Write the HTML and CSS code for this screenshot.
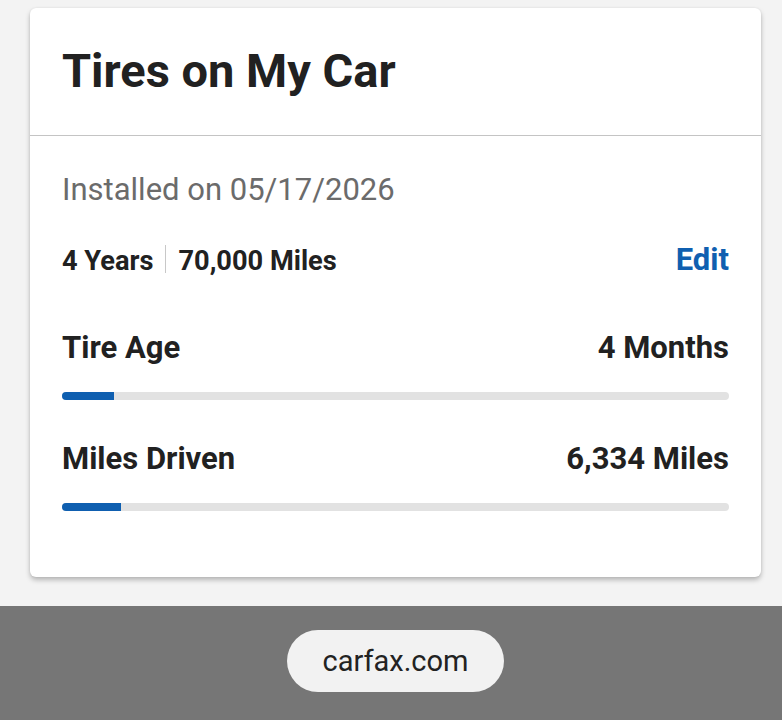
FILE: index.html
```html
<!DOCTYPE html>
<html>
<head>
  <meta charset="utf-8" />
  <title>Tires on My Car</title>
  <link rel="stylesheet" href="styles.css">
</head>
<body>
  <div class="page">
    <div class="card">
      <h1 class="card-title">Tires on My Car</h1>
      <div class="card-body">
        <div class="installed">Installed on 05/17/2026</div>
        <div class="warranty">
          <span class="warranty-info">4 Years<span class="sep"></span>70,000 Miles</span>
          <a class="edit" href="#">Edit</a>
        </div>
        <div class="stat">
          <div class="stat-row">
            <span>Tire Age</span>
            <span>4 Months</span>
          </div>
          <div class="bar"><div class="bar-fill" style="width: 7.8%"></div></div>
        </div>
        <div class="stat">
          <div class="stat-row">
            <span>Miles Driven</span>
            <span>6,334 Miles</span>
          </div>
          <div class="bar"><div class="bar-fill" style="width: 8.9%"></div></div>
        </div>
      </div>
    </div>
  </div>
  <div class="urlbar">
    <div class="url">carfax.com</div>
  </div>
</body>
</html>
```

FILE: styles.css
```css
html, body {
  margin: 0;
  height: 100%;
}
body {
  font-family: Roboto, "Noto Sans", Arial, sans-serif;
  background-color: #f3f3f3;
  color: #212121;
  display: flex;
  flex-direction: column;
  overflow: hidden;
}
.page {
  flex: 1;
  padding: 8px 21px 0 30px;
}
.card {
  background-color: #fff;
  border-radius: 6px;
  box-shadow: 0 3px 5px rgba(0, 0, 0, 0.25), 0 0 2px rgba(0, 0, 0, 0.08);
  overflow: hidden;
}
.card-title {
  margin: 0;
  height: 128px;
  padding: 0 32px 2px;
  display: flex;
  align-items: center;
  font-size: 47px;
  font-weight: bold;
  border-bottom: 1px solid #c4c4c4;
  box-sizing: border-box;
}
.card-body {
  padding: 36px 32px 66px;
}
.installed {
  font-size: 31px;
  color: #6b6b6b;
  line-height: 36px;
}
.warranty {
  margin-top: 32px;
  display: flex;
  justify-content: space-between;
  align-items: baseline;
  line-height: 40px;
}
.warranty-info {
  font-size: 27.2px;
  font-weight: bold;
}
.sep {
  display: inline-block;
  vertical-align: -3px;
  width: 1px;
  height: 28px;
  background-color: #c8c8c8;
  margin: 0 12px;
}
.edit {
  font-size: 31px;
  font-weight: bold;
  color: #0f5fb0;
  text-decoration: none;
}
.stat {
  margin-top: 47px;
}
.stat + .stat {
  margin-top: 39px;
}
.stat-row {
  display: flex;
  justify-content: space-between;
  font-size: 31px;
  font-weight: bold;
  line-height: 40px;
}
.bar {
  margin-top: 24px;
  height: 8px;
  border-radius: 4px;
  background-color: #e2e2e2;
  overflow: hidden;
}
.bar-fill {
  height: 100%;
  background-color: #0f5fb0;
}
.urlbar {
  height: 114px;
  background-color: #767676;
  display: flex;
  justify-content: center;
  padding: 24px 0 0 9px;
  box-sizing: border-box;
}
.url {
  height: 62px;
  padding: 0 35px;
  border-radius: 31px;
  background-color: #f2f2f2;
  display: flex;
  align-items: center;
  font-size: 29px;
  color: #222;
}
```
